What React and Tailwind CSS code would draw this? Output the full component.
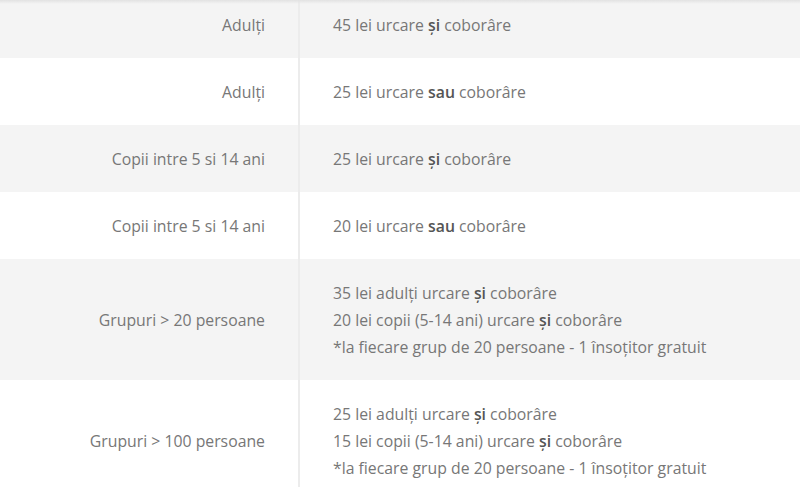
const rows = [
  { label: 'Adulți', lines: [['45 lei urcare ', 'și', ' coborâre']] },
  { label: 'Adulți', lines: [['25 lei urcare ', 'sau', ' coborâre']] },
  { label: 'Copii intre 5 si 14 ani', lines: [['25 lei urcare ', 'și', ' coborâre']] },
  { label: 'Copii intre 5 si 14 ani', lines: [['20 lei urcare ', 'sau', ' coborâre']] },
  {
    label: 'Grupuri > 20 persoane',
    lines: [
      ['35 lei adulți urcare ', 'și', ' coborâre'],
      ['20 lei copii (5-14 ani) urcare ', 'și', ' coborâre'],
      ['*la fiecare grup de 20 persoane - 1 însoțitor gratuit'],
    ],
  },
  {
    label: 'Grupuri > 100 persoane',
    lines: [
      ['25 lei adulți urcare ', 'și', ' coborâre'],
      ['15 lei copii (5-14 ani) urcare ', 'și', ' coborâre'],
      ['*la fiecare grup de 20 persoane - 1 însoțitor gratuit'],
    ],
  },
]

export default function App() {
  return (
    <div className="relative w-[800px] h-[487px] overflow-hidden bg-white font-['Open_Sans',sans-serif] text-[15.8px] leading-[27px] text-[#777]">
      <div className="-mt-[9px]">
        {rows.map((row, i) => (
          <div key={i} className={`flex ${i % 2 === 0 ? 'bg-[#f4f4f4]' : 'bg-white'}`}>
            <div className="w-[300px] shrink-0 flex items-center justify-end pr-[33px] pt-[21px] pb-[19px] border-r-2 border-[#ececec]">
              {row.label}
            </div>
            <div className="flex-1 pl-[33px] pt-[21px] pb-[19px]">
              {row.lines.map((l, j) => (
                <div key={j}>
                  {l[0]}
                  {l[1] && <strong className="font-semibold text-[#555]">{l[1]}</strong>}
                  {l[2]}
                </div>
              ))}
            </div>
          </div>
        ))}
      </div>
      <div className="absolute top-0 left-0 right-0 h-[4px] bg-gradient-to-b from-[#e2e2e2] to-transparent" />
    </div>
  )
}
